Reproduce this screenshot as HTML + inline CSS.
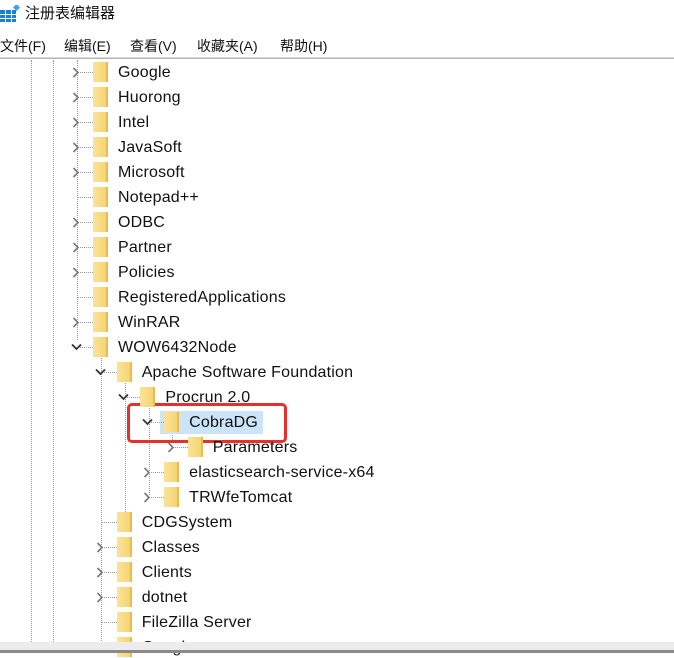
<!DOCTYPE html>
<html><head><meta charset="utf-8"><style>
body{margin:0;width:674px;height:653px;overflow:hidden;background:#fff;position:relative;font-family:"Liberation Sans","Noto Sans CJK SC",sans-serif;color:#111}
.a{position:absolute}
.t{position:absolute;font-size:16px;line-height:20px;white-space:nowrap;letter-spacing:0.2px}
.f{position:absolute;width:15px;height:20px;background:linear-gradient(90deg,#fbe39a,#f5d472);border-right:2px solid #e6bd50;box-sizing:border-box}
.vd{position:absolute;width:0;border-left:1px dotted #999}
.hd{position:absolute;height:0;border-top:1px dotted #999;width:7px}
</style></head><body>
<div class="a" style="left:0;top:5px;width:18px;height:17px">
<svg width="20" height="18"><g fill="#1c7ed6"><rect x="0" y="5" width="5" height="4"/><rect x="6" y="5" width="5" height="4"/><rect x="12" y="5" width="4" height="4"/><rect x="0" y="10" width="5" height="3"/><rect x="6" y="10" width="5" height="3"/><rect x="12" y="10" width="4" height="3"/><rect x="0" y="14" width="5" height="3"/><rect x="6" y="14" width="5" height="3"/><rect x="12" y="14" width="4" height="3"/></g><rect x="14" y="0" width="5" height="5" fill="#3fa0e8" transform="rotate(45 16.5 2.5)"/></svg></div>
<div class="t" style="left:25px;top:4px;font-size:15px;letter-spacing:0">注册表编辑器</div>
<div class="t" style="left:0;top:36px;font-size:14px;letter-spacing:0">文件(F)</div>
<div class="t" style="left:64px;top:36px;font-size:14px;letter-spacing:0">编辑(E)</div>
<div class="t" style="left:130px;top:36px;font-size:14px;letter-spacing:0">查看(V)</div>
<div class="t" style="left:197px;top:36px;font-size:14px;letter-spacing:0">收藏夹(A)</div>
<div class="t" style="left:280px;top:36px;font-size:14px;letter-spacing:0">帮助(H)</div>
<div class="a" style="left:0;top:57px;width:674px;height:2px;background:linear-gradient(#eee,#a0a0a0)"></div>
<div class="vd" style="left:31px;top:60px;height:582px"></div>
<div class="vd" style="left:53px;top:60px;height:582px"></div>
<div class="vd" style="left:77px;top:60px;height:280px"></div>
<div class="vd" style="left:101px;top:355px;height:290px"></div>
<div class="vd" style="left:125px;top:380px;height:140px"></div>
<div class="vd" style="left:149px;top:405px;height:90px"></div>
<div class="vd" style="left:172px;top:430px;height:10px"></div>
<div class="a" style="left:160px;top:411px;width:103px;height:23px;background:#cce4f7"></div>
<div class="a" style="left:127px;top:403px;width:154px;height:34px;border:3px solid #e8302a;border-radius:5px"></div>
<div id="tree"></div>
<script>
var rows=[["Google",1,">"],["Huorong",1,">"],["Intel",1,">"],["JavaSoft",1,">"],["Microsoft",1,">"],["Notepad++",1,""],["ODBC",1,">"],["Partner",1,">"],["Policies",1,">"],["RegisteredApplications",1,""],["WinRAR",1,">"],["WOW6432Node",1,"v"],["Apache Software Foundation",2,"v"],["Procrun 2.0",3,"v"],["CobraDG",4,"v"],["Parameters",5,">"],["elasticsearch-service-x64",4,">"],["TRWfeTomcat",4,">"],["CDGSystem",2,""],["Classes",2,">"],["Clients",2,">"],["dotnet",2,">"],["FileZilla Server",2,""],["Google",2,""]];
var h="";rows.forEach(function(r,i){var y=72+25*i,o=(r[1]-1)*23.7;
var cx=72+o,fx=93+o,tx=118+o;
h+='<div class="hd" style="left:'+(cx+6)+'px;top:'+y+'px;width:'+(fx-cx-6)+'px"></div>';
if(r[2]==">")h+='<svg class="a" style="left:'+cx+'px;top:'+(y-5)+'px" width="8" height="11"><path d="M1.5 1l4.5 4.5-4.5 4.5" fill="none" stroke="#777" stroke-width="1.6"/></svg>';
if(r[2]=="v")h+='<svg class="a" style="left:'+(cx-1)+'px;top:'+(y-4)+'px" width="11" height="8"><path d="M1 1.5l4.5 4.5 4.5-4.5" fill="none" stroke="#333" stroke-width="1.8"/></svg>';
h+='<div class="f" style="left:'+fx+'px;top:'+(y-10)+'px"></div>';
h+='<div class="t" style="left:'+tx+'px;top:'+(y-9)+'px">'+r[0]+'</div>';});
document.getElementById("tree").innerHTML=h;
</script>
<div class="a" style="left:0;top:642px;width:674px;height:8px;background:#ececec"></div>
<div class="a" style="left:0;top:650px;width:674px;height:3px;background:#8a8a8a"></div>
</body></html>
